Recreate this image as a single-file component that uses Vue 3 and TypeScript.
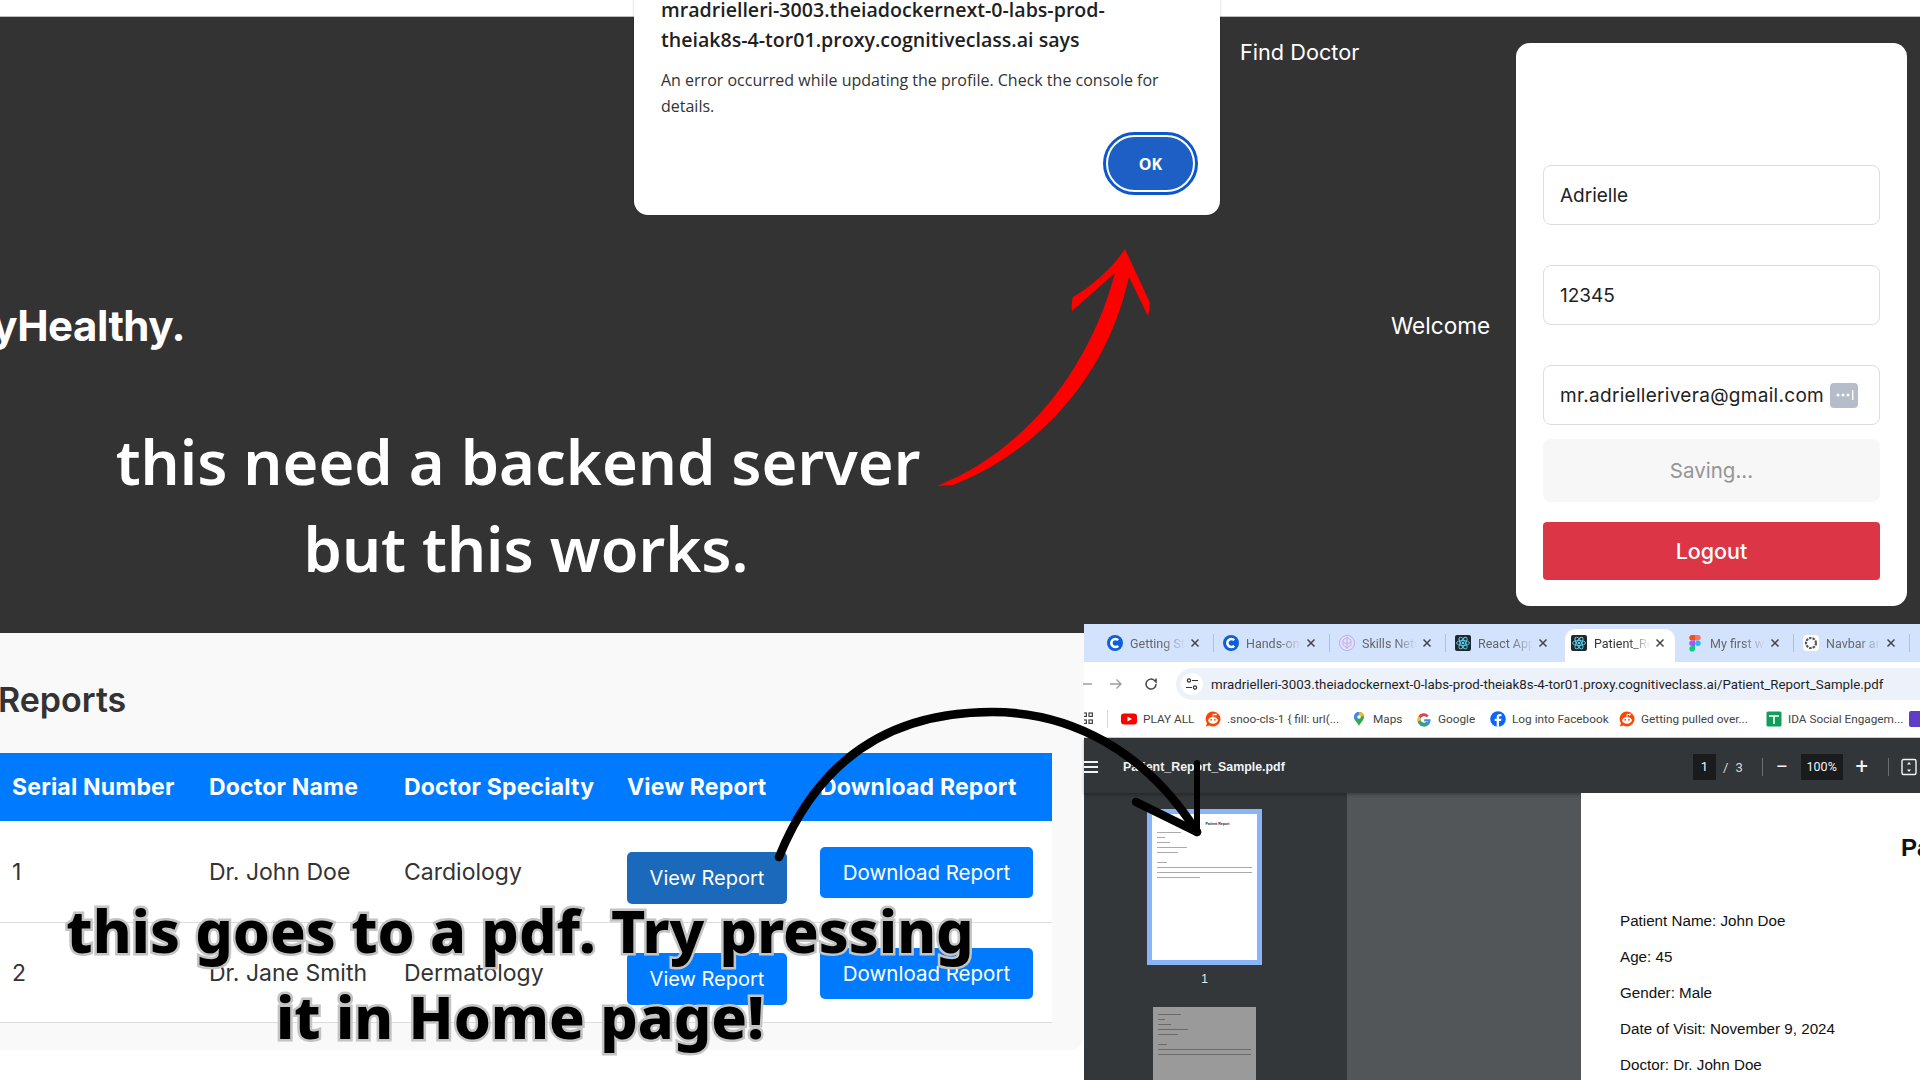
<script setup lang="ts">
const tabs = [
  { title: 'Getting Started', icon: 'c' },
  { title: 'Hands-on Lab', icon: 'c' },
  { title: 'Skills Network', icon: 'skills' },
  { title: 'React App', icon: 'react' },
  { title: 'Patient_Report', icon: 'react', active: true },
  { title: 'My first website', icon: 'figma' },
  { title: 'Navbar and', icon: 'gpt' },
]

const bookmarks = [
  { label: 'PLAY ALL', icon: 'yt', width: 84 },
  { label: '.snoo-cls-1 { fill: url(...', icon: 'reddit', width: 146 },
  { label: 'Maps', icon: 'maps', width: 65 },
  { label: 'Google', icon: 'google', width: 74 },
  { label: 'Log into Facebook', icon: 'fb', width: 129 },
  { label: 'Getting pulled over...', icon: 'reddit', width: 147 },
  { label: 'IDA Social Engagem...', icon: 'ida', width: 143 },
]

const reports = [
  { id: 1, doctor: 'Dr. John Doe', specialty: 'Cardiology', visited: true },
  { id: 2, doctor: 'Dr. Jane Smith', specialty: 'Dermatology', visited: false },
]

const patientLines = [
  'Patient Name: John Doe',
  'Age: 45',
  'Gender: Male',
  'Date of Visit: November 9, 2024',
  'Doctor: Dr. John Doe',
]

const thumbOne = [25, 8, 14, 32, 22, 0, 10, 100, 100, 45]
const thumbTwo = [25, 8, 14, 32, 22, 0, 10, 100, 100]
</script>

<template>
  <div class="canvas">
    <div class="top-strip"></div>

    <section class="hero">
      <div class="brand">yHealthy.</div>
      <div class="find">Find Doctor</div>
      <div class="welcome">Welcome</div>

      <form class="profile" @submit.prevent>
        <div class="field">Adrielle</div>
        <div class="field">12345</div>
        <div class="field email">
          <span>mr.adriellerivera@gmail.com</span>
          <span class="pw-key">
            <svg width="24" height="22" viewBox="0 0 24 22">
              <circle cx="6" cy="11" r="1.500" fill="#fff" />
              <circle cx="11" cy="11" r="1.500" fill="#fff" />
              <circle cx="16" cy="11" r="1.500" fill="#fff" />
              <rect x="20" y="6" width="1.400" height="10" fill="#fff" />
            </svg>
          </span>
        </div>
        <button class="saving" type="button">Saving...</button>
        <button class="logout" type="button">Logout</button>
      </form>

      <div class="caption-white">
        <div>this need a backend server</div>
        <div class="second">but this works.</div>
      </div>
    </section>

    <section class="reports">
      <h2>Reports</h2>
      <table>
        <thead>
          <tr>
            <th>Serial Number</th>
            <th>Doctor Name</th>
            <th>Doctor Specialty</th>
            <th>View Report</th>
            <th>Download Report</th>
          </tr>
        </thead>
        <tbody>
          <tr v-for="r in reports" :key="r.id">
            <td>{{ r.id }}</td>
            <td>{{ r.doctor }}</td>
            <td>{{ r.specialty }}</td>
            <td><button :class="['btn', 'view', { visited: r.visited }]">View Report</button></td>
            <td><button class="btn download">Download Report</button></td>
          </tr>
        </tbody>
      </table>
    </section>

    <section class="browser">
      <div class="tabbar">
        <div v-for="t in tabs" :key="t.title" :class="['tab', { active: t.active }]">
          <svg class="fav" width="18" height="18" viewBox="0 0 18 18">
            <template v-if="t.icon === 'c'">
              <circle cx="9" cy="9" r="8" fill="#0f5fdc" />
              <path d="M12.200 6.200a4 4 0 1 0 0 5.600" fill="none" stroke="#fff" stroke-width="2.600" />
            </template>
            <template v-else-if="t.icon === 'skills'">
              <circle cx="9" cy="9" r="7.500" fill="#e4e0fa" stroke="#b9adf0" />
              <path d="M9 3.500l4 2.500v5l-4 3-4-3V6zM9 3.500v11M5 8l4 2 4-2" fill="none" stroke="#b3a6ec" stroke-width=".8" />
            </template>
            <template v-else-if="t.icon === 'react'">
              <rect x="1" y="1" width="16" height="16" rx="2" fill="#20272e" />
              <g fill="none" stroke="#5fd3ee" stroke-width=".9">
                <ellipse cx="9" cy="9" rx="6.500" ry="2.500" />
                <ellipse cx="9" cy="9" rx="6.500" ry="2.500" transform="rotate(60 9 9)" />
                <ellipse cx="9" cy="9" rx="6.500" ry="2.500" transform="rotate(120 9 9)" />
              </g>
              <circle cx="9" cy="9" r="1.300" fill="#5fd3ee" />
            </template>
            <template v-else-if="t.icon === 'figma'">
              <path d="M6 1h3v5.500H6a2.700 2.700 0 0 1 0-5.500z" fill="#f24e1e" />
              <path d="M9 1h3a2.700 2.700 0 0 1 0 5.500H9z" fill="#ff7262" />
              <path d="M6 6.500h3V12H6a2.700 2.700 0 0 1 0-5.500z" fill="#a259ff" />
              <circle cx="12" cy="9.200" r="2.700" fill="#1abcfe" />
              <path d="M6 12h3v2.700a2.800 2.800 0 1 1-3-2.700z" fill="#0acf83" />
            </template>
            <template v-else>
              <rect x="1" y="1" width="16" height="16" rx="4" fill="#fff" />
              <circle cx="9" cy="9" r="5" fill="none" stroke="#555" stroke-width="2.200" stroke-dasharray="2.500 1" />
            </template>
          </svg>
          <span class="tab-title">{{ t.title }}</span>
          <svg class="tab-x" width="10" height="10" viewBox="0 0 10 10">
            <path d="M1.500 1.500l7 7M8.500 1.500l-7 7" stroke="#444" stroke-width="1.500" />
          </svg>
        </div>
      </div>

      <div class="addressbar">
        <svg class="nav back" width="12" height="14" viewBox="0 0 12 14"><path d="M3 7h9" stroke="#999" stroke-width="1.400" /></svg>
        <svg class="nav forward" width="16" height="14" viewBox="0 0 16 14"><path d="M2 7h11M8.500 2.500 13 7l-4.500 4.500" fill="none" stroke="#9a9da1" stroke-width="1.400" /></svg>
        <svg class="nav reload" width="16" height="16" viewBox="0 0 16 16"><path d="M13 8a5 5 0 1 1-1.500-3.500L13 6V2.500" fill="none" stroke="#444" stroke-width="1.500" /></svg>
        <div class="url">
          <span class="tune">
            <svg width="16" height="16" viewBox="0 0 16 16">
              <g fill="none" stroke="#333" stroke-width="1.200">
                <circle cx="5" cy="4.500" r="1.600" /><path d="M8 4.500h6" />
                <circle cx="11" cy="11.500" r="1.600" /><path d="M2 11.500h6" />
              </g>
            </svg>
          </span>
          <span class="url-text">mradrielleri-3003.theiadockernext-0-labs-prod-theiak8s-4-tor01.proxy.cognitiveclass.ai/Patient_Report_Sample.pdf</span>
        </div>
      </div>

      <div class="bookmarks">
        <svg class="apps" width="12" height="14" viewBox="0 0 12 14">
          <g fill="none" stroke="#444" stroke-width="1.200"><rect x="1" y="1" width="3.400" height="3.400" /><rect x="7" y="1" width="3.400" height="3.400" /><rect x="1" y="8" width="3.400" height="3.400" /><rect x="7" y="8" width="3.400" height="3.400" /></g>
        </svg>
        <span class="bm-sep"></span>
        <div v-for="b in bookmarks" :key="b.label" class="bm" :style="{ width: b.width + 'px' }">
          <svg width="16" height="16" viewBox="0 0 16 16">
            <template v-if="b.icon === 'yt'">
              <rect x="0" y="2.500" width="16" height="11" rx="3" fill="#f00" />
              <path d="M6.500 5.500 11 8l-4.500 2.500z" fill="#fff" />
            </template>
            <template v-else-if="b.icon === 'reddit'">
              <path d="M8 .5a7.500 7.500 0 1 1-3.600 14.100L.8 15.500l1.200-3.200A7.500 7.500 0 0 1 8 .5z" fill="#ff4500" />
              <ellipse cx="8" cy="9.300" rx="4.800" ry="3.400" fill="#fff" />
              <path d="M8 6V3.200l2.600.5" fill="none" stroke="#fff" stroke-width=".9" />
              <circle cx="10.800" cy="3.600" r="1" fill="#fff" />
              <circle cx="6.100" cy="8.800" r=".9" fill="#ff4500" /><circle cx="9.900" cy="8.800" r=".9" fill="#ff4500" />
            </template>
            <template v-else-if="b.icon === 'maps'">
              <path d="M8 1a5 5 0 0 1 5 5c0 3.400-3.600 5.600-5 9-1.400-3.400-5-5.600-5-9a5 5 0 0 1 5-5z" fill="#34a853" />
              <path d="M8 1a5 5 0 0 1 4.500 2.800L4 8.800A5 5 0 0 1 3 6a5 5 0 0 1 5-5z" fill="#4285f4" />
              <path d="M8 1a5 5 0 0 1 5 3.400L8.500 6.500z" fill="#fbbc04" />
              <circle cx="8" cy="6" r="1.800" fill="#fff" />
            </template>
            <template v-else-if="b.icon === 'google'">
              <path d="M14.500 8.200H8.200v2.400h3.600a3.900 3.900 0 1 1-1.100-4.400l1.800-1.800A6.500 6.500 0 1 0 14.500 8.200z" fill="#4285f4" />
              <path d="M2.300 5.200 4.400 6.800A3.900 3.900 0 0 1 10.700 6.200l1.800-1.800a6.500 6.500 0 0 0-10.200.8z" fill="#ea4335" />
              <path d="M2.200 10.800 4.400 9.200a3.900 3.900 0 0 1 0-2.400L2.300 5.200a6.500 6.500 0 0 0-.1 5.600z" fill="#fbbc04" />
              <path d="M8 14.500a6.500 6.500 0 0 1-5.800-3.700l2.200-1.600a3.900 3.900 0 0 0 6.200 1.500l2 1.600A6.500 6.500 0 0 1 8 14.500z" fill="#34a853" />
            </template>
            <template v-else-if="b.icon === 'fb'">
              <circle cx="8" cy="8" r="7.800" fill="#0866ff" />
              <path d="M9 15.800V10h2l.4-2.300H9V6.400c0-.7.3-1.200 1.300-1.200h1.200V3.200C11 3.100 10.400 3 9.800 3 8 3 6.700 4.100 6.700 6.100v1.600H4.700V10h2v5.800z" fill="#fff" />
            </template>
            <template v-else>
              <rect x="0.500" y="0.500" width="15" height="15" rx="1.500" fill="#0f9d58" />
              <path d="M3 5h10M8 5v8" stroke="#fff" stroke-width="1.600" />
            </template>
          </svg>
          <span>{{ b.label }}</span>
        </div>
        <span class="bm-purple"></span>
      </div>

      <div class="pdf-toolbar">
        <span class="burger"><i></i><i></i><i></i></span>
        <span class="pdf-title">Patient_Report_Sample.pdf</span>
        <span class="page-box">1</span>
        <span class="page-of">/</span>
        <span class="page-of total">3</span>
        <span class="tb-sep"></span>
        <span class="tb-btn">−</span>
        <span class="zoom-box">100%</span>
        <span class="tb-btn">+</span>
        <span class="tb-sep"></span>
        <svg class="fit" width="18" height="18" viewBox="0 0 18 18">
          <rect x="2" y="1.500" width="14" height="15" rx="1.500" fill="none" stroke="#f1f3f4" stroke-width="1.400" />
          <path d="M9 4 7 6.500h4zM9 14l-2-2.500h4z" fill="#f1f3f4" />
        </svg>
      </div>

      <div class="pdf-body">
        <aside class="thumbs">
          <div class="thumb current">
            <div class="thumb-head">Patient Report</div>
            <div v-for="(w, i) in thumbOne" :key="i" class="thumb-line" :style="{ width: w + '%' }"></div>
          </div>
          <div class="thumb-num">1</div>
          <div class="thumb dim">
            <div v-for="(w, i) in thumbTwo" :key="i" class="thumb-line" :style="{ width: w + '%' }"></div>
          </div>
        </aside>
        <main class="viewer">
          <article class="page">
            <h1>Patient Report</h1>
            <p v-for="l in patientLines" :key="l">{{ l }}</p>
          </article>
        </main>
      </div>
    </section>

    <div class="dialog">
      <h3>mradrielleri-3003.theiadockernext-0-labs-prod-<br />theiak8s-4-tor01.proxy.cognitiveclass.ai says</h3>
      <p>An error occurred while updating the profile. Check the console for details.</p>
      <div class="dialog-actions"><button class="ok">OK</button></div>
    </div>

    <svg class="arrows" width="1920" height="1080" viewBox="0 0 1920 1080">
      <path d="M937 486C1010 458 1085 385 1115 273L1072 311Q1071 303 1073 297C1095 284 1112 268 1125 249L1150 303Q1150 310 1148 316L1129 277C1105 385 1030 455 953 485Z" fill="#ff0000" />
      <g fill="none" stroke="#000" stroke-linecap="round">
        <path d="M779 857C820 755 895 712 992 712 1070 712 1145 750 1197 832" stroke-width="8.500" />
        <path d="M1197 832 1136 802" stroke-width="8.500" />
        <path d="M1197 832 1197 763" stroke-width="6" />
      </g>
    </svg>

    <div class="caption-black">
      <div>this goes to a pdf. Try pressing</div>
      <div>it in Home page!</div>
    </div>
  </div>
</template>

<style>
html, body { margin: 0; padding: 0; background: #fff; }
</style>

<style scoped>
.canvas { position: relative; width: 1920px; height: 1080px; overflow: hidden; background: #fff; font-family: Inter, "Open Sans", sans-serif; }

.top-strip { height: 17px; background: #fff; border-bottom: 1px solid #bdbdbd; box-sizing: border-box; }

.hero { position: relative; height: 616px; background: #333; color: #fff; }
.brand { position: absolute; right: 1735px; top: 281px; font-size: 42px; font-weight: 700; letter-spacing: -0.5px; white-space: nowrap; line-height: 56px; }
.find { position: absolute; left: 1240px; top: 20px; font-size: 21.700px; line-height: 30px; }
.welcome { position: absolute; left: 1391px; top: 294px; font-size: 22.600px; line-height: 30px; }

.profile { position: absolute; left: 1516px; top: 26px; width: 391px; height: 563px; box-sizing: border-box; padding: 122px 27px 0; background: #fff; border-radius: 14px; display: flex; flex-direction: column; }
.field { height: 60px; box-sizing: border-box; border: 1px solid #ddd; border-radius: 8px; margin-bottom: 40px; padding: 0 16px; display: flex; align-items: center; justify-content: space-between; color: #222; font-size: 19px; }
.field.email { margin-bottom: 14px; padding-right: 21px; letter-spacing: 0.3px; }
.pw-key { width: 28px; height: 25px; background: #b5bdca; border-radius: 4px; display: flex; align-items: center; justify-content: center; }
.saving { height: 63px; border: none; border-radius: 8px; background: #f7f7f7; color: #959595; font: 400 20.500px Inter, sans-serif; margin-bottom: 20px; }
.logout { height: 58px; border: none; border-radius: 4px; background: #dc3545; color: #fff; font: 500 21.500px Inter, sans-serif; }

.caption-white { position: absolute; left: 0; top: 401px; width: 1036px; text-align: center; font-family: "Noto Sans", sans-serif; font-weight: 600; font-size: 61.400px; line-height: 87px; white-space: nowrap; }
.caption-white .second { padding-left: 16px; }

.reports { width: 1084px; height: 417px; background: #f9f9f9; border-bottom-right-radius: 14px; box-sizing: border-box; padding-top: 44px; overflow: hidden; }
.reports h2 { margin: 0 0 30px -2px; font-size: 34px; line-height: 46px; font-weight: 600; color: #333; }
.reports table { width: 1052px; border-collapse: collapse; table-layout: fixed; background: #fff; font-size: 23px; color: #333; }
.reports th { height: 68px; background: #007bff; color: #fff; text-align: left; font-size: 23px; font-weight: 700; padding: 0 12px; white-space: nowrap; box-sizing: border-box; letter-spacing: 0.2px; }
.reports td { height: 100px; padding: 2px 12px 0; border-bottom: 1px solid #ddd; box-sizing: border-box; white-space: nowrap; }
.reports tbody tr:first-child td { height: 101px; }
.reports th:nth-child(1) { width: 197px; }
.reports th:nth-child(2) { width: 195px; }
.reports th:nth-child(3) { width: 223px; }
.reports th:nth-child(4) { width: 193px; }
.btn { border: none; border-radius: 5px; color: #fff; background: #007bff; font: 400 20.500px Inter, sans-serif; display: block; padding: 0; white-space: nowrap; }
.btn.view { width: 160px; height: 52px; margin-top: 12px; font-size: 20px; }
.btn.view.visited { background: #1a69bb; }
.btn.download { width: 213px; height: 51px; margin-top: 0; }

.browser { position: absolute; left: 1084px; top: 624px; width: 836px; height: 456px; background: #fff; font-family: Roboto, "Liberation Sans", sans-serif; }
.tabbar { height: 38px; background: #d3e3fd; display: flex; padding-left: 14px; align-items: flex-end; }
.tab { width: 116px; height: 33px; box-sizing: border-box; display: flex; align-items: center; padding: 0 14px 5px 8px; font-size: 12.500px; color: #666; position: relative; flex: none; }
.tab::after { content: ""; position: absolute; right: 0; top: 5px; height: 18px; width: 1px; background: #a9c1e8; }
.tab.active { width: 110px; margin: 0 3px; padding: 0 10px 5px 5px; background: #fff; border-radius: 10px 10px 0 0; color: #333; }
.tab.active::after, .tab:nth-child(4)::after { display: none; }
.fav { flex: none; margin-right: 6px; }
.tab-title { flex: 1; overflow: hidden; white-space: nowrap; -webkit-mask-image: linear-gradient(90deg, #000 60%, transparent); mask-image: linear-gradient(90deg, #000 60%, transparent); }
.tab-x { flex: none; margin-left: 5px; }

.addressbar { height: 44px; display: flex; align-items: center; background: #fff; }
.nav.back { margin-left: -4px; }
.nav.forward { margin-left: 16px; }
.nav.reload { margin-left: 19px; }
.url { height: 32px; flex: 1; margin-left: 17px; background: #edf2fa; border-radius: 16px 0 0 16px; display: flex; align-items: center; padding-left: 5px; gap: 8px; font-size: 13.300px; color: #1f1f1f; white-space: nowrap; overflow: hidden; }
.tune { width: 22px; height: 22px; background: #fff; border-radius: 50%; display: flex; align-items: center; justify-content: center; flex: none; }

.bookmarks { height: 32px; box-sizing: border-box; padding-bottom: 5px; border-bottom: 1px solid #ccc; display: flex; align-items: center; font-size: 11.800px; color: #444; white-space: nowrap; overflow: hidden; }
.apps { margin-left: -2px; flex: none; }
.bm-sep { width: 1px; height: 18px; background: #c9d7ee; margin: 0 13px 0 13px; flex: none; }
.bm { display: flex; align-items: center; gap: 6px; flex: none; }
.bm svg { flex: none; }
.bm-purple { width: 14px; height: 16px; background: #5f3dc4; border-radius: 2px; flex: none; }

.pdf-toolbar { height: 55px; box-sizing: border-box; padding-top: 3px; background: #323639; color: #f1f3f4; display: flex; align-items: center; font-size: 14px; box-shadow: 0 2px 3px rgba(0, 0, 0, .25); position: relative; }
.burger { width: 14px; display: flex; flex-direction: column; gap: 3px; }
.burger i { display: block; height: 2px; background: #f1f3f4; }
.pdf-title { margin-left: 25px; font-family: "Liberation Sans", sans-serif; font-weight: 700; font-size: 12.400px; width: 571px; }
.page-box { width: 23px; height: 26px; background: #191b1c; text-align: center; line-height: 26px; font-size: 13px; margin-left: -1px; }
.page-of { margin-left: 7px; font-size: 13px; color: #d8d8d8; }
.page-of.total { margin-left: 7px; }
.tb-sep { width: 1px; height: 18px; background: #6a6e71; margin: 0 12px 0 19px; }
.tb-btn { font-size: 22px; line-height: 22px; width: 14px; text-align: center; }
.zoom-box { width: 42px; height: 26px; background: #191b1c; text-align: center; line-height: 26px; font-size: 12.500px; margin: 0 12px; }
.fit { margin-left: -1px; }

.pdf-body { height: 287px; display: flex; overflow: hidden; font-family: "Liberation Sans", sans-serif; }
.thumbs { width: 263px; background: #33373a; display: flex; flex-direction: column; align-items: center; padding: 16px 22px 0 0; box-sizing: border-box; flex: none; }
.thumb { box-sizing: border-box; background: #fff; padding: 8px 5px 0; flex: none; }
.thumb.current { width: 115px; height: 156px; border: 5px solid #8ab4f8; }
.thumb.dim { width: 103px; height: 130px; background: #9a9a9a; padding: 7px 5px; }
.thumb-head { font-size: 3.500px; font-weight: 700; text-align: center; margin: 0 0 5px 26px; line-height: 5px; color: #222; }
.thumb-line { height: 1px; background: #aaa; margin-bottom: 4px; }
.thumb.dim .thumb-line { background: #6a6a6a; }
.thumb-num { color: #e8eaed; font-size: 12px; margin: 7px 0 21px; line-height: 14px; }
.viewer { flex: 1; background: #525659; padding-left: 234px; min-width: 0; }
.page { background: #fff; height: 100%; box-sizing: border-box; padding: 41px 0 0 39px; color: #111; width: 339px; overflow: hidden; position: relative; }
.page h1 { margin: 0 0 49px 281px; font-size: 24px; line-height: 28px; white-space: nowrap; }
.page p { margin: 0 0 16px; font-size: 15.200px; line-height: 20px; white-space: nowrap; }

.dialog { position: absolute; left: 634px; top: -36px; width: 586px; height: 251px; background: #fff; border-radius: 0 0 14px 14px; box-shadow: 0 0 2px rgba(0, 0, 0, .3); box-sizing: border-box; padding: 31px 27px 0; font-family: "Open Sans", sans-serif; color: #1f1f1f; }
.dialog h3 { margin: 0 0 12px; font-size: 19.600px; font-weight: 600; line-height: 30px; white-space: nowrap; }
.dialog p { margin: 0; font-size: 16px; line-height: 26px; color: #333; }
.dialog-actions { position: absolute; right: 24px; bottom: 22px; }
.ok { width: 91px; height: 59px; border-radius: 30px; background: #1d5fc4; color: #fff; border: 3px solid #fff; outline: 3px solid #0b57d0; outline-offset: -1px; font: 700 16px "Open Sans", sans-serif; }

.arrows { position: absolute; left: 0; top: 0; pointer-events: none; }

.caption-black { position: absolute; left: 0; top: 887px; width: 1040px; text-align: center; font-family: "Noto Sans", sans-serif; font-weight: 800; font-size: 59px; line-height: 86px; color: #000; -webkit-text-stroke: 5px #c4c4c4; paint-order: stroke fill; white-space: nowrap; }
</style>
